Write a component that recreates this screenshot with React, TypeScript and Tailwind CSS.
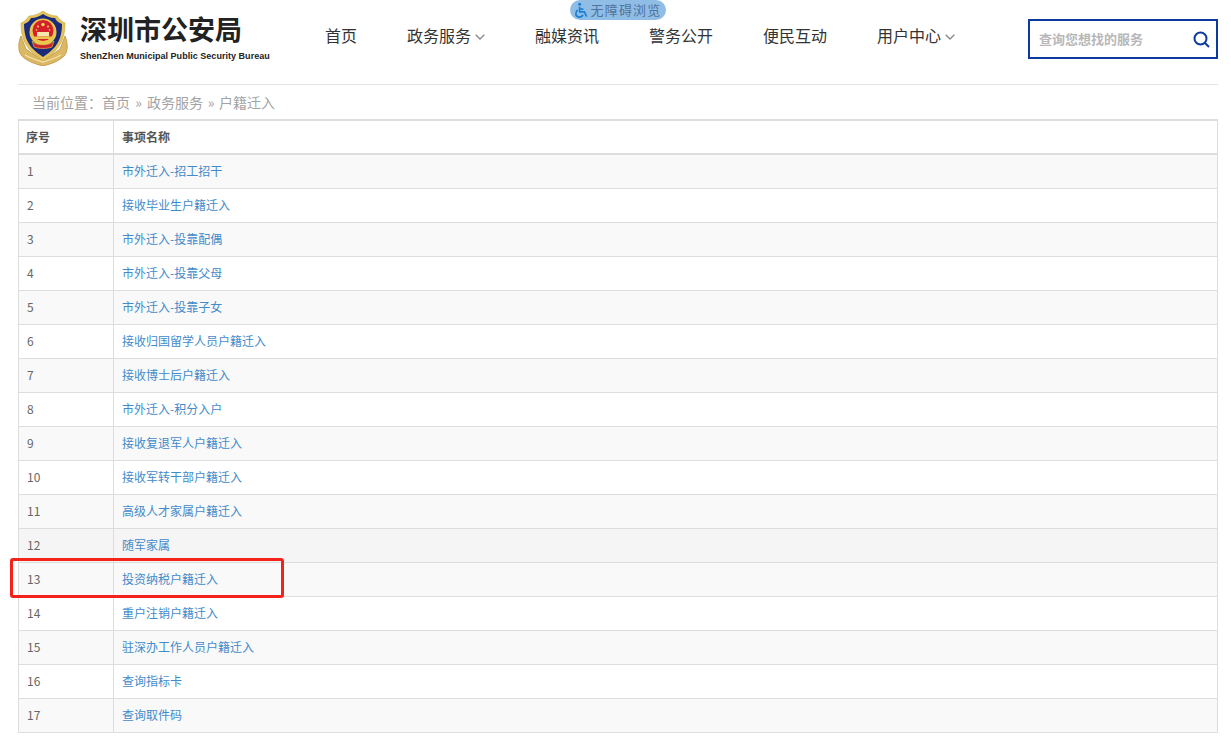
import React from "react";

const rows = [
  "市外迁入-招工招干",
  "接收毕业生户籍迁入",
  "市外迁入-投靠配偶",
  "市外迁入-投靠父母",
  "市外迁入-投靠子女",
  "接收归国留学人员户籍迁入",
  "接收博士后户籍迁入",
  "市外迁入-积分入户",
  "接收复退军人户籍迁入",
  "接收军转干部户籍迁入",
  "高级人才家属户籍迁入",
  "随军家属",
  "投资纳税户籍迁入",
  "重户注销户籍迁入",
  "驻深办工作人员户籍迁入",
  "查询指标卡",
  "查询取件码",
];

function Emblem() {
  return (
    <svg width="50" height="55" viewBox="0 0 50 55" className="shrink-0">
      <path d="M3 25 C0 32 0 39 3 44 C8 50 17 53 25 55 C33 53 42 50 47 44 C50 39 50 32 47 25 L42 38 L25 50 L8 38 Z" fill="#dcb865" stroke="#b58c3c" strokeWidth="0.7" />
      <path d="M7 44 C12 47 18 49 25 51 C32 49 38 47 43 44" fill="none" stroke="#f3e2a8" strokeWidth="1.4" />
      <path d="M3 12 C6 11 9 8 11 5 C16 5 21 3 25 0 C29 3 34 5 39 5 C41 8 44 11 47 12 C47 24 44 33 37 40 C33 44 29 47 25 50 C21 47 17 44 13 40 C6 33 3 24 3 12 Z" fill="#e3c45a" stroke="#c9a23f" strokeWidth="0.6" />
      <path d="M6 13 C9 12 12 10 13 7 C18 7 22 5 25 3 C28 5 32 7 37 7 C38 10 41 12 44 13 C44 24 41 32 35 38 C32 41 28 44 25 46 C22 44 18 41 15 38 C9 32 6 24 6 13 Z" fill="#1b2b7c" />
      <circle cx="25" cy="21" r="13.5" fill="#e9c64e" />
      <circle cx="25" cy="19.5" r="10.5" fill="#d4202a" />
      <circle cx="25" cy="13.5" r="1.7" fill="#f6da5c" />
      <circle cx="20" cy="15.5" r="1" fill="#f6da5c" />
      <circle cx="30" cy="15.5" r="1" fill="#f6da5c" />
      <circle cx="18.5" cy="19" r="0.8" fill="#f6da5c" />
      <circle cx="31.5" cy="19" r="0.8" fill="#f6da5c" />
      <rect x="19" y="21" width="12" height="4.5" fill="#f6e6a8" />
      <rect x="17" y="25.5" width="16" height="2.5" fill="#e9c64e" />
      <path d="M14 30 C18 35 32 35 36 30 L34 36 C29 38 21 38 16 36 Z" fill="#c9252b" stroke="#e9c64e" strokeWidth="0.6" />
    </svg>
  );
}

function Chevron() {
  return (
    <svg width="10" height="6" viewBox="0 0 10 6" className="ml-[4px] mt-[3px]" fill="none" stroke="#888888" strokeWidth="1.3">
      <path d="M0.7 0.8 L5 5 L9.3 0.8" />
    </svg>
  );
}

function NavItem({ label, chevron }: { label: string; chevron?: boolean }) {
  return (
    <div className="flex items-center text-[16px] text-[#333333] whitespace-nowrap">
      <span>{label}</span>
      {chevron && <Chevron />}
    </div>
  );
}

export default function App() {
  return (
    <div className="relative w-[1231px] h-[746px] bg-white overflow-hidden pl-[18px] pr-[13px] font-['Microsoft_YaHei','Noto_Sans_CJK_SC',sans-serif]">
      <header className="relative flex h-[85px] items-center border-b border-[#e4e4e4] pb-[13px]">
        <div className="flex w-[307px] items-center">
          <div className="mt-[6px]"><Emblem /></div>
          <div className="ml-[12px] flex flex-col mt-[4px]">
            <div className="text-[27px] leading-[30px] font-bold text-[#222222]">深圳市公安局</div>
            <div className="mt-[7px] text-[9px] leading-[11px] font-bold whitespace-nowrap tracking-[0.03px] text-[#222222] font-['Liberation_Sans',sans-serif]">ShenZhen Municipal Public Security Bureau</div>
          </div>
        </div>
        <nav className="flex items-center gap-[50px] mt-[-1px]">
          <NavItem label="首页" />
          <NavItem label="政务服务" chevron />
          <NavItem label="融媒资讯" />
          <NavItem label="警务公开" />
          <NavItem label="便民互动" />
          <NavItem label="用户中心" chevron />
        </nav>
        <div className="ml-auto flex h-[40px] w-[190px] items-center justify-between border-2 border-[#0e3a9e] pl-[9px] pr-[6px] mt-[7px]">
          <span className="text-[13px] font-bold text-[#b8b8b8] whitespace-nowrap">查询您想找的服务</span>
          <svg width="17" height="17" viewBox="0 0 17 17" fill="none" stroke="#0e3a9e" strokeWidth="2">
            <circle cx="7.5" cy="7.5" r="6" />
            <path d="M12 12 L16 16" />
          </svg>
        </div>
        <div className="absolute left-[552px] top-0 flex h-[20px] w-[96px] items-center justify-center rounded-full bg-[#8fbde6] text-[13px] tracking-[1.2px] text-[#4f739c] whitespace-nowrap">
          <svg width="15" height="17" viewBox="0 0 16 18" fill="none" stroke="#1a7fd1" strokeWidth="1.8" className="mr-[1px] shrink-0">
            <circle cx="6" cy="2.2" r="1.6" fill="#1a7fd1" stroke="none" />
            <path d="M6 5 V10.5 H11 L13.5 15.5" />
            <path d="M6 7.5 H10" />
            <path d="M4 8.5 C1 10.5 1 15.5 5.5 16 C7.5 16 9 15 9.5 13.5" />
          </svg>
          <span>无障碍浏览</span>
        </div>
      </header>

      <div className="flex h-[34px] items-center gap-[4px] pl-[14px] text-[14px] text-[#a3a3a3] whitespace-nowrap">
        <span>当前位置：首页</span>
        <span className="w-[9px] text-center text-[14px]">»</span>
        <span>政务服务</span>
        <span className="w-[8px] text-center text-[14px]">»</span>
        <span>户籍迁入</span>
      </div>

      <table className="w-[1200px] table-fixed border-collapse text-[12px] text-[#666666]">
        <thead>
          <tr className="h-[34px]">
            <th className="w-[95px] border border-t-2 border-b-2 border-[#dddddd] pl-[7px] text-left font-bold text-[#555555]">序号</th>
            <th className="border border-t-2 border-b-2 border-[#dddddd] pl-[8px] text-left font-bold text-[#555555]">事项名称</th>
          </tr>
        </thead>
        <tbody>
          {rows.map((name, i) => (
            <tr key={name} className={i === 11 ? "h-[34px] bg-[#f5f5f5]" : i % 2 === 0 ? "h-[34px] bg-[#f9f9f9]" : "h-[34px] bg-white"}>
              <td className="border border-[#dddddd] pl-[8px] pb-[1px]">{i + 1}</td>
              <td className="border border-[#dddddd] pl-[8px] pb-[1px] text-[#428bca]">{name}</td>
            </tr>
          ))}
        </tbody>
      </table>

      <div className="absolute left-[10px] top-[558px] h-[40px] w-[274px] rounded-[3px] border-[3px] border-[#f5221b]" />
    </div>
  );
}
